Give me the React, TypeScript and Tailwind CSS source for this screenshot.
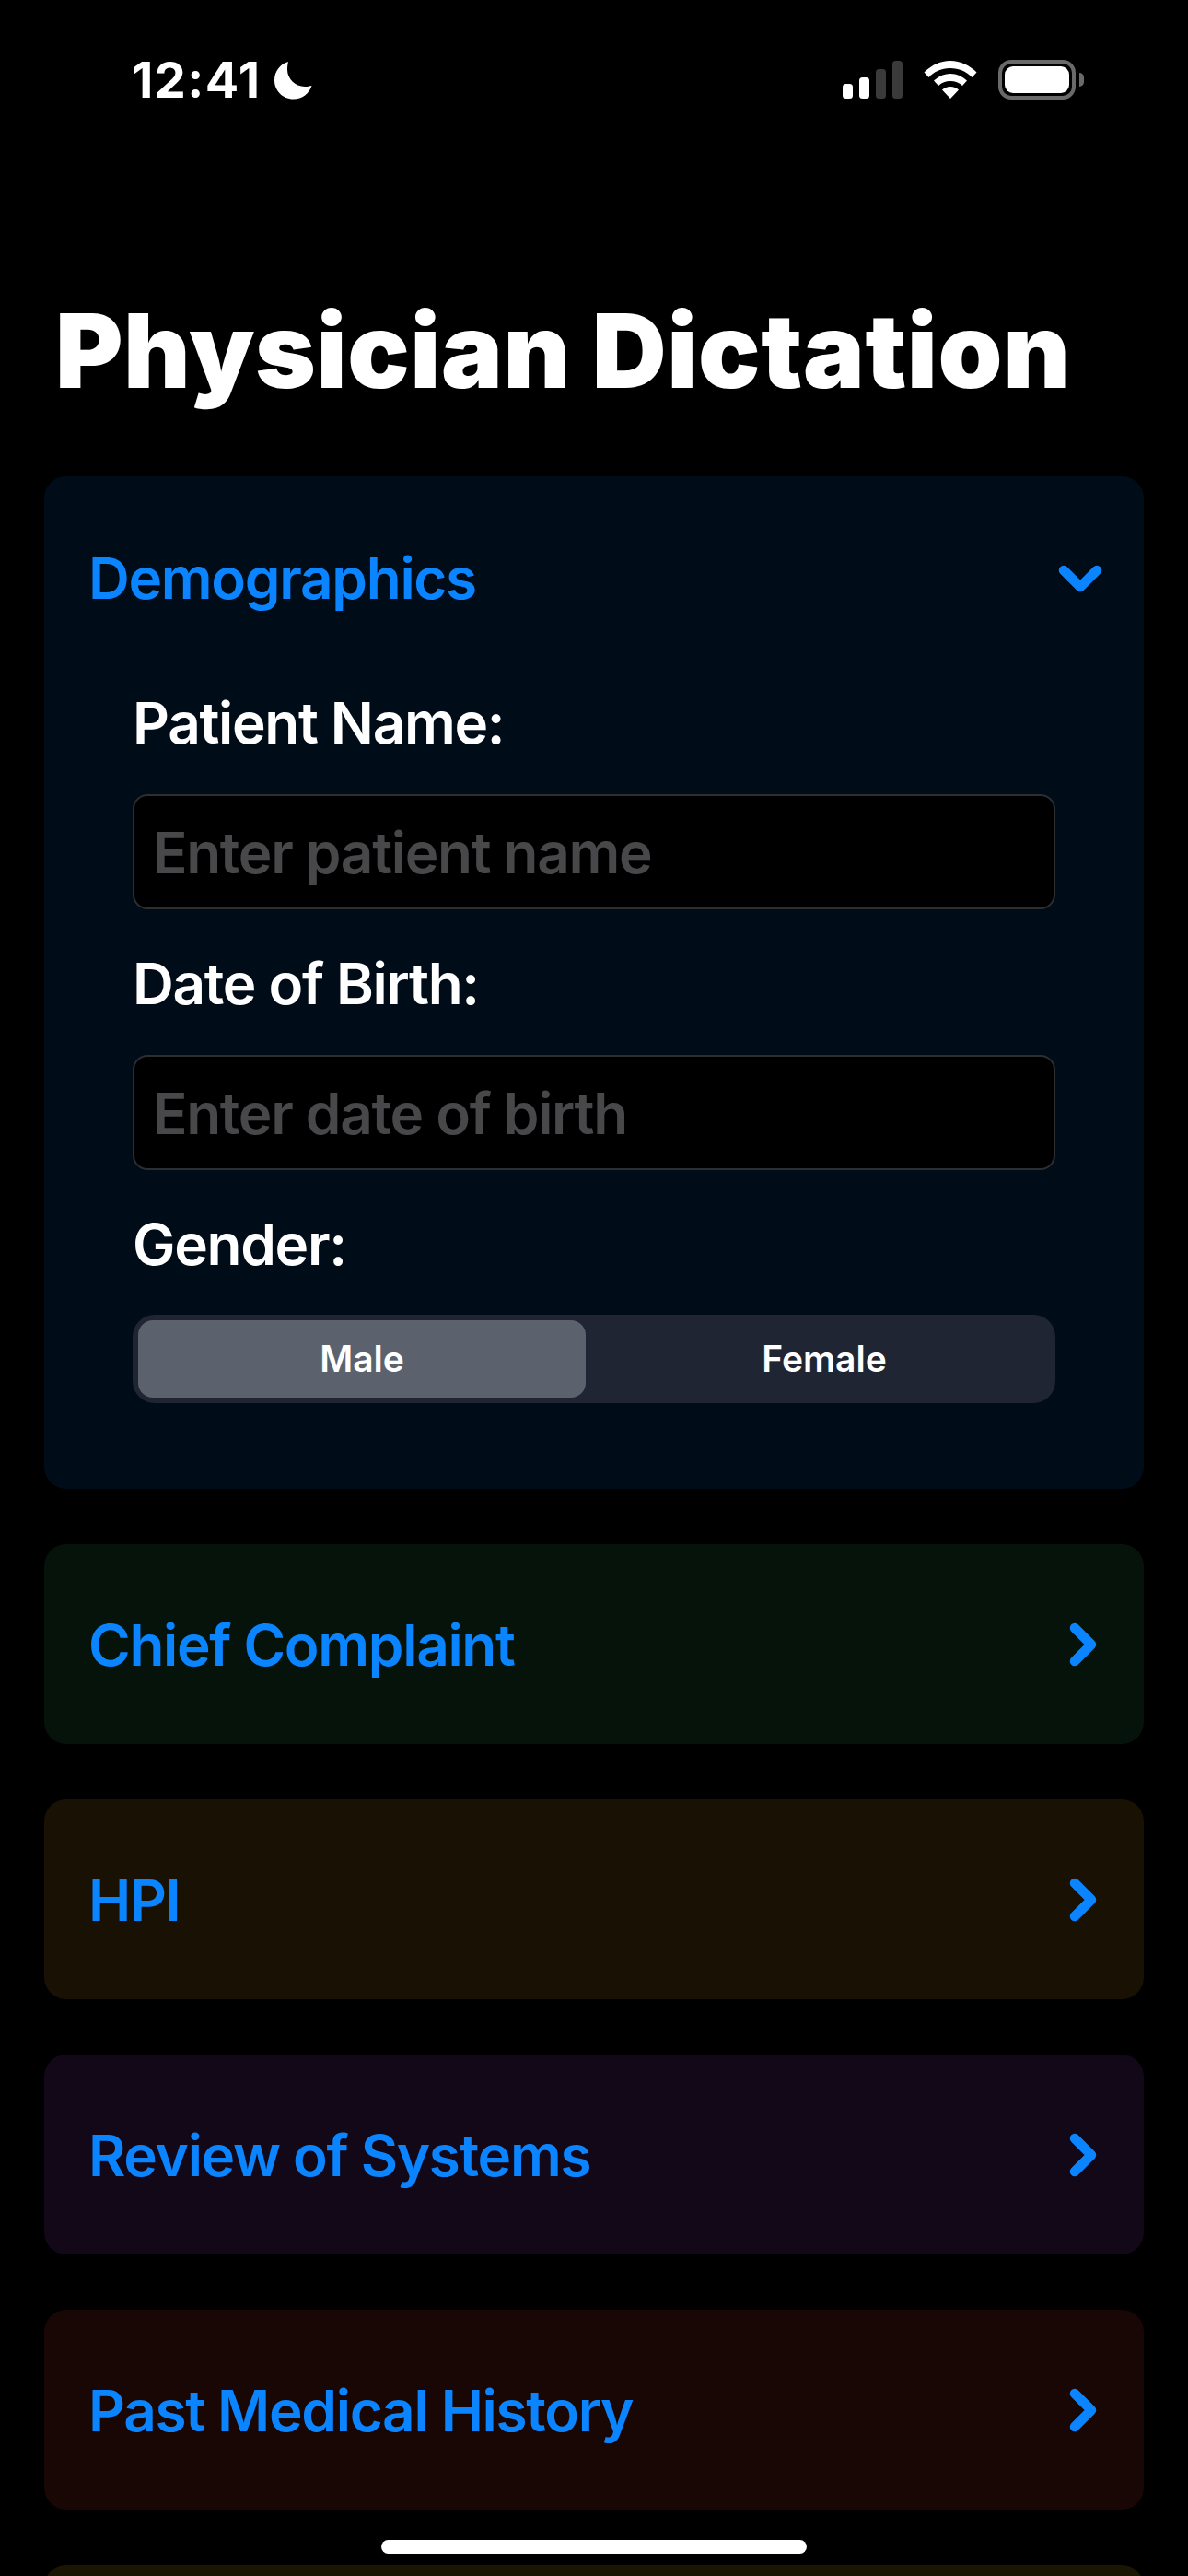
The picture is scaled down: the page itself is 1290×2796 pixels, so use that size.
const sf = "font-['Inter','Liberation_Sans',sans-serif]";
const body = "text-[62px] font-semibold leading-[72px] tracking-[-1.3px]";

function Chevron({ open }: { open?: boolean }) {
  return (
    <svg width="60" height="60" viewBox="0 0 60 60" fill="none" className={open ? "" : "-rotate-90"}>
      <path d="M12 21 L30 39 L48 21" stroke="#0a84ff" strokeWidth="10.5" strokeLinecap="round" strokeLinejoin="round" />
    </svg>
  );
}

function StatusBar() {
  return (
    <div className="flex h-[108px] items-start justify-between pl-[143px] pr-[113px] pt-[60px] text-white">
      <div className="flex items-center gap-[14px]">
        <span className="text-[54px] font-bold leading-[54px] tracking-[1.5px]">12:41</span>
        <svg width="42" height="42" viewBox="0 0 42 42" fill="white">
          <path d="M15 1 C6 3.500 0 11.500 0 21 C0 32.500 9 41.500 20.500 41.500 C30 41.500 38 35.500 40.500 27 C38 27.500 36 28 33 28 C22.500 28 14 19.500 14 9.500 C14 6.500 14.300 3.500 15 1 Z" />
        </svg>
      </div>
      <div className="flex items-center gap-[23px] pt-[5px]">
        <svg width="65" height="41" viewBox="0 0 65 41">
          <rect x="0" y="25" width="11" height="16" rx="3.500" fill="white" />
          <rect x="18" y="18" width="11" height="23" rx="3.500" fill="white" />
          <rect x="36" y="9" width="11" height="32" rx="3.500" fill="#3a3a3a" />
          <rect x="54" y="0" width="11" height="41" rx="3.500" fill="#3a3a3a" />
        </svg>
        <svg width="58" height="42" viewBox="0 0 58 42" fill="white">
          <path d="M29 0 C40 0 50 5 57.500 12.500 L52.500 18 C46.500 11.500 38 8 29 8 C20 8 11.500 11.500 5.500 18 L0.500 12.500 C8 5 18 0 29 0 Z" />
          <path d="M29 14 C36 14 42 17 47 21.500 L42 27 C38.500 23.500 34 22 29 22 C24 22 19.500 23.500 16 27 L11 21.500 C16 17 22 14 29 14 Z" />
          <path d="M29 28 C32.500 28 35.500 29.300 38 31.500 L29 41 L20 31.500 C22.500 29.300 25.500 28 29 28 Z" />
        </svg>
        <div className="flex items-center gap-[4px]">
          <div className="flex h-[43px] w-[84px] items-center justify-center rounded-[14px] border-[4px] border-[#6a6a6a]">
            <div className="h-[29px] w-[70px] rounded-[9px] bg-white" />
          </div>
          <div className="h-[15px] w-[5px] rounded-r-full bg-[#6a6a6a]" />
        </div>
      </div>
    </div>
  );
}

function Field({ label, placeholder }: { label: string; placeholder: string }) {
  return (
    <div>
      <div className={`${body} text-white`}>{label}</div>
      <div className={`mt-[41px] flex h-[125px] items-center rounded-[16px] border-2 border-[#2c2e32] bg-black px-[20px] ${body} pt-[2px] text-[#48484a]`}>
        {placeholder}
      </div>
    </div>
  );
}

function Section({ title, bg }: { title: string; bg: string }) {
  return (
    <div className={`flex h-[217px] shrink-0 items-center justify-between rounded-[24px] pl-[48px] pr-[36px] ${bg}`}>
      <span className={`${body} pt-[3px] text-[#0a84ff]`}>{title}</span>
      <Chevron />
    </div>
  );
}

export default function App() {
  return (
    <div className={`relative h-[2796px] w-[1290px] overflow-hidden bg-black ${sf}`}>
      <StatusBar />
      <h1 className="ml-[60px] mt-[204px] text-[112px] font-black leading-[136px] tracking-[0.6px] text-white">
        Physician Dictation
      </h1>
      <div className="mx-[48px] mt-[69px] flex flex-col gap-[60px]">
        <div className="h-[1099px] shrink-0 rounded-[24px] bg-[#000d19] pl-[48px] pr-[39px]">
          <div className="flex h-[221px] items-center justify-between">
            <span className={`${body} text-[#0a84ff]`}>Demographics</span>
            <Chevron open />
          </div>
          <div className="ml-[48px] mr-[57px] mt-[11px] flex flex-col gap-[45px]">
            <Field label="Patient Name:" placeholder="Enter patient name" />
            <Field label="Date of Birth:" placeholder="Enter date of birth" />
            <div>
              <div className={`${body} text-white`}>Gender:</div>
              <div className="mt-[40px] flex h-[96px] gap-[14px] rounded-[24px] bg-[#1f2532] p-[6px] text-[39px] font-semibold text-white">
                <div className="flex w-[486px] items-center justify-center rounded-[16px] bg-[#5c626d]">Male</div>
                <div className="flex flex-1 items-center justify-center">Female</div>
              </div>
            </div>
          </div>
        </div>
        <Section title="Chief Complaint" bg="bg-[#05130b]" />
        <Section title="HPI" bg="bg-[#191104]" />
        <Section title="Review of Systems" bg="bg-[#130818]" />
        <Section title="Past Medical History" bg="bg-[#190705]" />
        <Section title="" bg="bg-[#1b1503]" />
      </div>
      <div className="absolute bottom-[24px] left-[414px] h-[15px] w-[462px] rounded-full bg-white" />
    </div>
  );
}
